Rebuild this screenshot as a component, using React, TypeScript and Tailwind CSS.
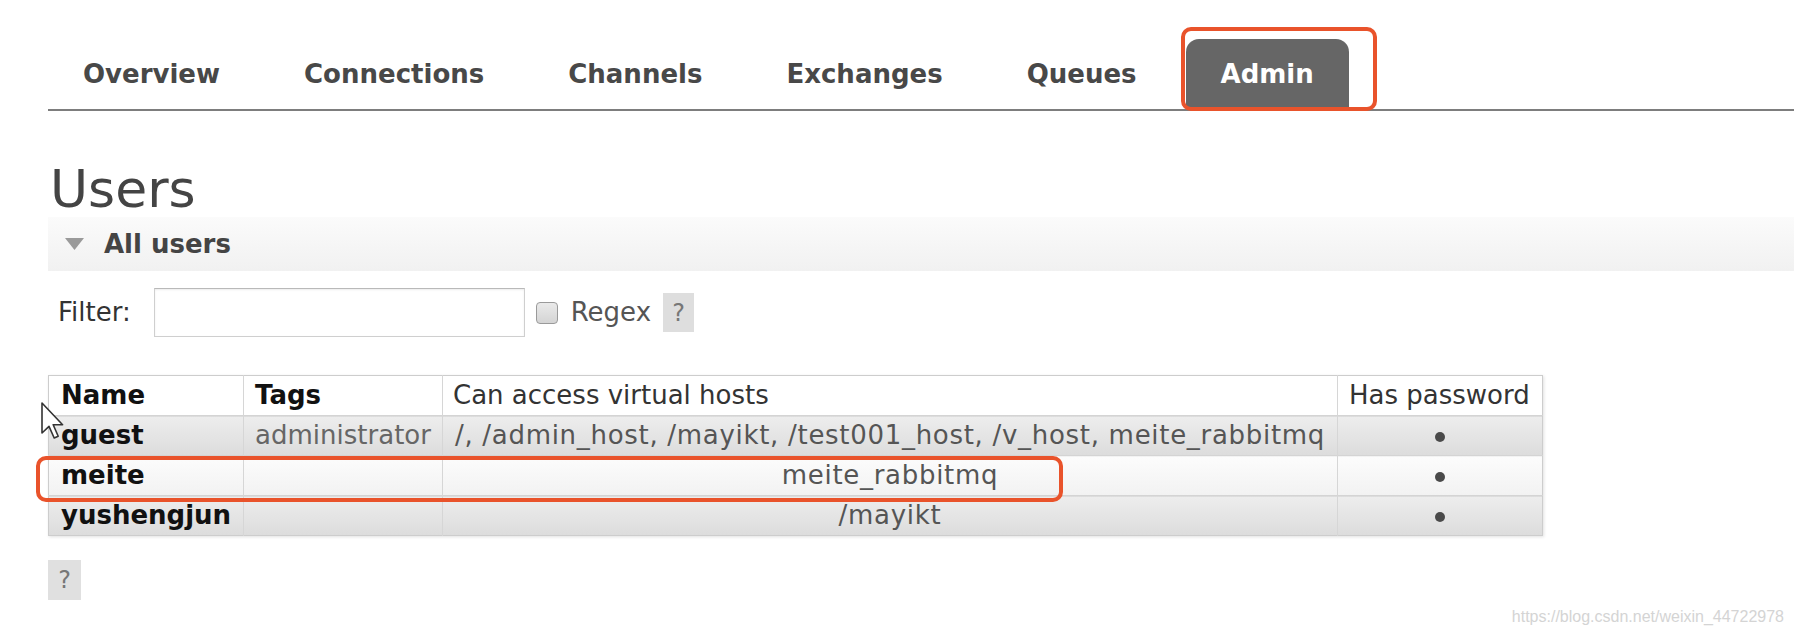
import React from 'react';

const tabs = ['Overview', 'Connections', 'Channels', 'Exchanges', 'Queues', 'Admin'];

const users = [
  {
    name: 'guest',
    tags: 'administrator',
    vhosts: '/, /admin_host, /mayikt, /test001_host, /v_host, meite_rabbitmq',
  },
  { name: 'meite', tags: '', vhosts: 'meite_rabbitmq' },
  { name: 'yushengjun', tags: '', vhosts: '/mayikt' },
];

function Dot() {
  return <span className="inline-block w-[10px] h-[10px] rounded-full bg-[#4a4a4a] align-middle" />;
}

function Cursor() {
  // mouse pointer left over the table in the screenshot
  return (
    <svg className="absolute left-[41px] top-[402px]" width="24" height="38" viewBox="0 0 12 19">
      <path
        d="M0.5 0.5 L0.5 15.5 L4 12.2 L6.6 18 L8.6 17.1 L6.1 11.4 L10.8 11.4 Z"
        fill="#fff"
        stroke="#333"
        strokeWidth="0.8"
        strokeLinejoin="round"
      />
    </svg>
  );
}

export default function App() {
  return (
    <div className="relative w-full min-h-[640px] bg-white font-['DejaVu_Sans',Verdana,sans-serif] text-[#444] overflow-hidden">
      {/* top nav */}
      <nav className="ml-[48px] pt-[39px] flex gap-[14px] border-b-2 border-[#7d7d7d]">
        {tabs.map((t) => (
          <div
            key={t}
            className={
              t === 'Admin'
                ? 'relative h-[70px] px-[35px] flex items-center text-[26px] font-bold rounded-t-[13px] bg-[#666] text-white'
                : 'relative h-[70px] px-[35px] flex items-center text-[26px] font-bold text-[#484848]'
            }
          >
            {t}
            {t === 'Admin' && (
              <div className="absolute -left-[5px] -top-[12px] -right-[28px] -bottom-[2px] border-[4px] border-[#e9532b] rounded-[10px]" />
            )}
          </div>
        ))}
      </nav>

      <h1 className="ml-[50px] mt-[50px] text-[52px] leading-[56px] text-[#444]">Users</h1>

      {/* section header */}
      <div className="ml-[48px] h-[54px] flex items-center bg-gradient-to-b from-[#fbfbfb] to-[#f1f1f1]">
        <svg className="ml-[17px]" width="19" height="12" viewBox="0 0 19 12">
          <polygon points="0,0 19,0 9.5,12" fill="#9a9a9a" />
        </svg>
        <span className="ml-[20px] text-[26px] font-bold text-[#444]">All users</span>
      </div>

      {/* filter */}
      <div className="ml-[58px] mt-[17px] h-[49px] flex items-center text-[26px]">
        <span className="text-[#333]">Filter:</span>
        <div className="ml-[23px] w-[371px] h-[49px] bg-white border border-[#cfcfcf] border-t-[#b9b9b9] shadow-[inset_0_1px_2px_rgba(0,0,0,0.08)]" />
        <div className="ml-[11px] w-[22px] h-[22px] rounded-[4px] border border-[#9a9a9a] bg-gradient-to-b from-[#eaeaea] to-[#d4d4d4]" />
        <span className="ml-[13px] text-[#555]">Regex</span>
        <span className="ml-[12px] w-[31px] h-[39px] flex items-center justify-center bg-[#dedede] text-[#777] text-[24px]">?</span>
      </div>

      {/* users table */}
      <div className="relative ml-[48px] mt-[38px] w-[1494px]">
        <table className="w-[1494px] table-fixed border-collapse border border-[#cdcdcd] shadow-[1px_1px_3px_rgba(0,0,0,0.12)] text-[26px]">
          <colgroup>
            <col className="w-[195px]" />
            <col className="w-[199px]" />
            <col className="w-[895px]" />
            <col className="w-[205px]" />
          </colgroup>
          <thead>
            <tr className="h-[40px] bg-white">
              <th className="text-left pl-[12px] font-bold text-[#111] border-r border-[#d6d6d6]">Name</th>
              <th className="text-left pl-[11px] font-bold text-[#111] border-r border-[#d6d6d6]">Tags</th>
              <th className="text-left pl-[10px] font-normal text-[#333] border-r border-[#d6d6d6]">Can access virtual hosts</th>
              <th className="text-left pl-[11px] font-normal text-[#333] whitespace-nowrap">Has password</th>
            </tr>
          </thead>
          <tbody>
            {users.map((u, i) => (
              <tr
                key={u.name}
                className={
                  i % 2 === 0
                    ? 'h-[40px] border-t border-[#d4d4d4] bg-gradient-to-b from-[#ededed] to-[#dcdcdc]'
                    : 'h-[40px] border-t border-[#d4d4d4] bg-gradient-to-b from-[#fcfcfc] to-[#f2f2f2]'
                }
              >
                <td className="pl-[12px] font-bold text-[#111] border-r border-[#d6d6d6] whitespace-nowrap">{u.name}</td>
                <td className="text-center text-[#666] border-r border-[#d6d6d6] whitespace-nowrap">{u.tags}</td>
                <td className="text-center text-[#555] tracking-[0.7px] border-r border-[#d6d6d6] whitespace-nowrap">{u.vhosts}</td>
                <td className="text-center">
                  <Dot />
                </td>
              </tr>
            ))}
          </tbody>
        </table>
        {/* highlight around the meite row */}
        <div className="absolute -left-[12px] top-[81px] w-[1027px] h-[46px] border-[4px] border-[#e9532b] rounded-[10px]" />
      </div>

      <div className="ml-[48px] mt-[24px] w-[33px] h-[40px] flex items-center justify-center bg-[#e0e0e0] text-[#777] text-[24px]">
        ?
      </div>

      <Cursor />

      <div className="absolute right-[10px] bottom-[11px] font-['Liberation_Sans',Arial,sans-serif] text-[16px] text-[#d4d4d4]">
        https://blog.csdn.net/weixin_44722978
      </div>
    </div>
  );
}
